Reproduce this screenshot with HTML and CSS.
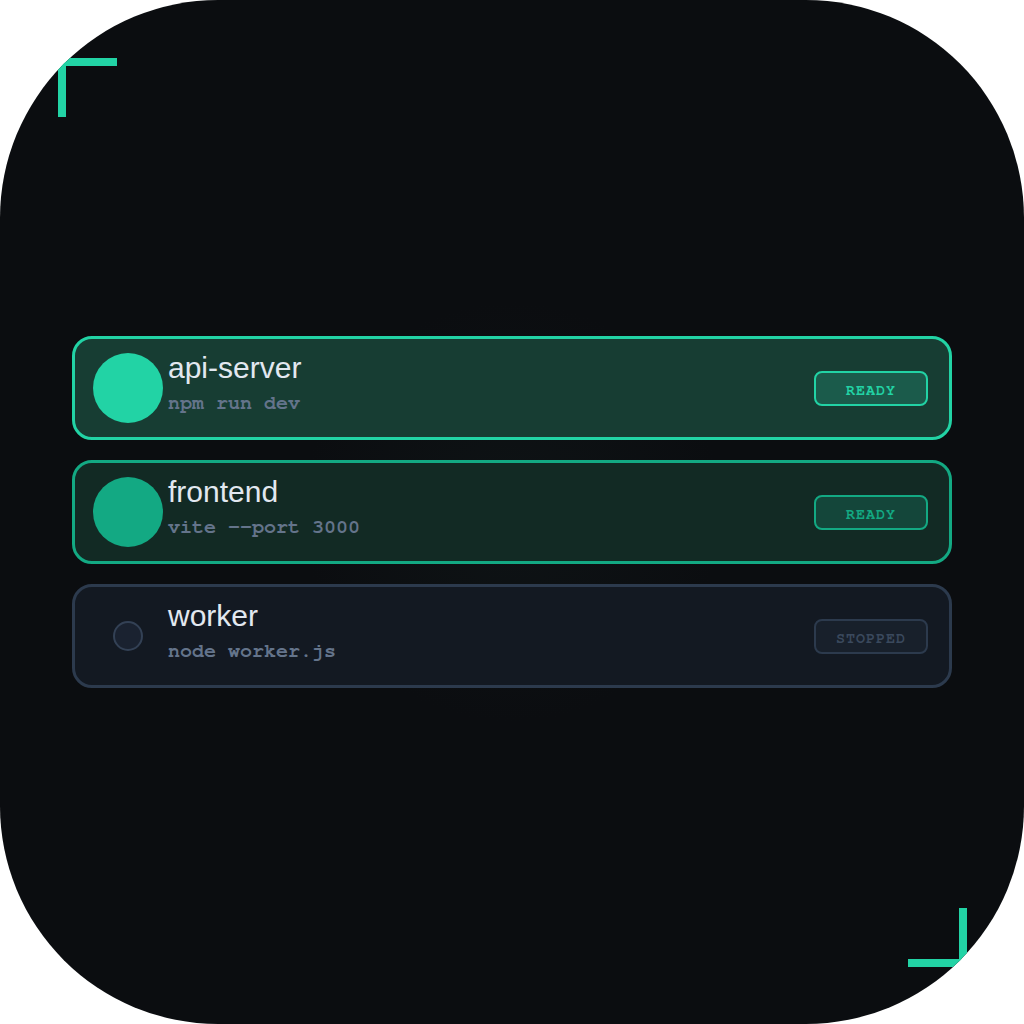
FILE: index.html
```html
<!DOCTYPE html>
<html lang="en">
<head>
  <meta charset="UTF-8" />
  <meta name="viewport" content="width=device-width, initial-scale=1.0" />
  <title>Processes</title>
  <link rel="stylesheet" href="styles.css">
</head>
<body>
  <div class="frame">
    <span class="corner corner-tl"></span>
    <span class="corner corner-br"></span>

    <ul class="procs">
      <li class="proc proc-live">
        <span class="dot"></span>
        <div class="info">
          <div class="name">api-server</div>
          <div class="cmd">npm run dev</div>
        </div>
        <span class="badge">READY</span>
      </li>
      <li class="proc proc-idle">
        <span class="dot"></span>
        <div class="info">
          <div class="name">frontend</div>
          <div class="cmd">vite --port 3000</div>
        </div>
        <span class="badge">READY</span>
      </li>
      <li class="proc proc-off">
        <span class="dot"><span class="dot-ring"></span></span>
        <div class="info">
          <div class="name">worker</div>
          <div class="cmd">node worker.js</div>
        </div>
        <span class="badge">STOPPED</span>
      </li>
    </ul>
  </div>
</body>
</html>
```

FILE: styles.css
```css
body {
  margin: 0;
  background-color: #fff;
  font-family: "Liberation Sans", Arial, sans-serif;
}

.frame {
  position: relative;
  width: 1024px;
  height: 1024px;
  border-radius: 218px;
  overflow: hidden;
  background: radial-gradient(circle at 50% 50%, #0e1315 0, #0b0d10 210px);
  display: flex;
  align-items: center;
  justify-content: center;
}

/* corner brackets */
.corner {
  position: absolute;
  width: 51px;
  height: 51px;
  border-color: #22d3a5;
  border-style: solid;
  border-width: 0;
}

.corner-tl {
  top: 58px;
  left: 58px;
  border-top-width: 8px;
  border-left-width: 8px;
}

.corner-br {
  right: 57px;
  bottom: 57px;
  border-bottom-width: 8px;
  border-right-width: 8px;
}

.procs {
  list-style: none;
  margin: 0;
  padding: 0;
  width: 880px;
  display: flex;
  flex-direction: column;
  gap: 20px;
}

.proc {
  display: flex;
  align-items: flex-start;
  padding: 14px 21px 14px 18px;
  border: 3px solid;
  border-radius: 20px;
}

.dot {
  width: 70px;
  height: 70px;
  border-radius: 50%;
  margin-right: 5px;
  flex-shrink: 0;
  display: flex;
  align-items: center;
  justify-content: center;
}

.dot-ring {
  width: 26px;
  height: 26px;
  border-radius: 50%;
  border: 2px solid #334155;
  background-color: #1a2230;
}

.name {
  font-size: 30px;
  line-height: 30px;
  color: #e2e8f0;
}

.cmd {
  margin-top: 10px;
  font-family: "Nimbus Mono PS", "Nimbus Mono L", FreeMono, Courier, "Courier New", monospace;
  font-weight: bold;
  font-size: 20px;
  line-height: 20px;
  color: #64748b;
}

.badge {
  margin-left: auto;
  align-self: center;
  width: 110px;
  height: 27px;
  padding-top: 4px;
  border: 2px solid;
  border-radius: 8px;
  display: flex;
  align-items: center;
  justify-content: center;
  font-family: "Nimbus Mono PS", "Nimbus Mono L", FreeMono, Courier, "Courier New", monospace;
  font-weight: bold;
  font-size: 15px;
  letter-spacing: 1px;
}

/* states */
.proc-live {
  background-color: #173d33;
  border-color: #22d3a5;
}

.proc-live .dot {
  background-color: #22d3a5;
}

.proc-live .badge {
  background-color: #1b5b4b;
  border-color: #22d3a5;
  color: #22d3a5;
}

.proc-idle {
  background-color: #122a24;
  border-color: #13a983;
}

.proc-idle .dot {
  background-color: #13a983;
}

.proc-idle .badge {
  background-color: #14463a;
  border-color: #13a983;
  color: #13a983;
}

.proc-off {
  background-color: #131922;
  border-color: #2c3a4d;
}

.proc-off .badge {
  background-color: #18202b;
  border-color: #2c3a4d;
  color: #3a495d;
}
```
